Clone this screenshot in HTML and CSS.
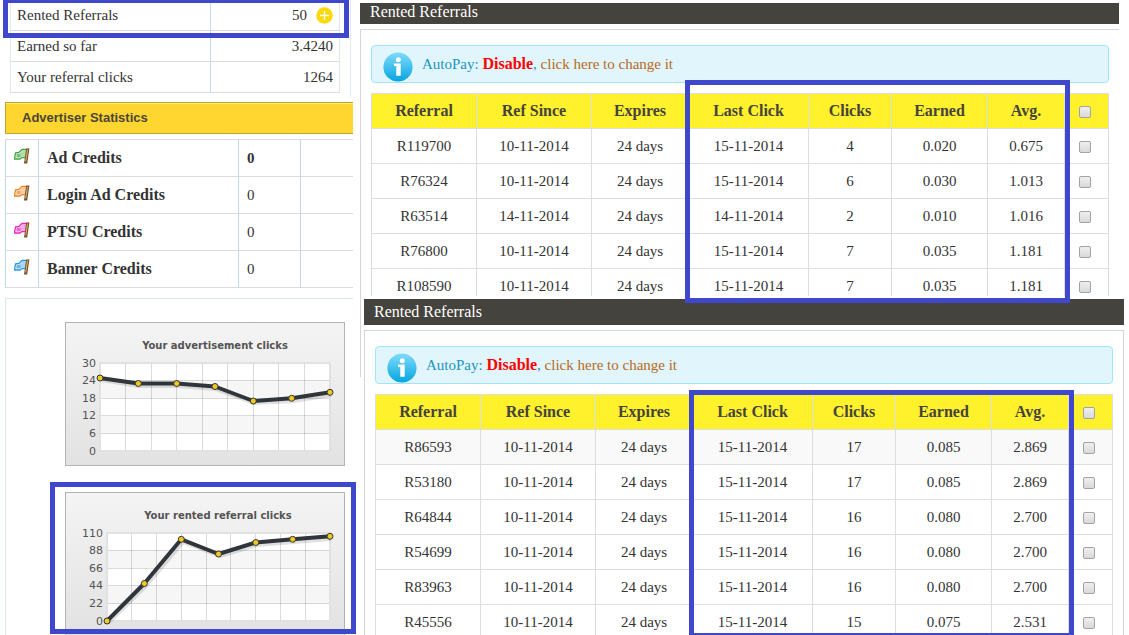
FILE: index.html
```html
<!DOCTYPE html>
<html lang="en">
<head>
<meta charset="utf-8">
<title>Rented Referrals</title>
<link rel="stylesheet" href="styles.css">
</head>
<body>
<svg class="defs" aria-hidden="true">
  <defs>
    <linearGradient id="chart-bg" x1="0" y1="0" x2="0" y2="1"><stop offset="0" stop-color="#f4f4f4"/><stop offset="1" stop-color="#e2e2e2"/></linearGradient>
    <linearGradient id="info-bg" x1="0" y1="0" x2="0" y2="1"><stop offset="0" stop-color="#7fdcfb"/><stop offset="1" stop-color="#05a5e0"/></linearGradient>
    <symbol id="info" viewBox="0 0 30 30">
      <circle cx="15" cy="15" r="14.6" fill="url(#info-bg)"/>
      <circle cx="15.3" cy="7.7" r="2.5" fill="#fff"/>
      <path d="M11 11.500h6.700v12.200h-4.400v-9.600H11z" fill="#fff"/>
    </symbol>
    <symbol id="flag" viewBox="0 0 16 16">
      <path d="M1.500 5l3.500-.5 3-3h5.500l-1.500 8-4-.2-2 1.700H.5z" fill="#fff" stroke="currentColor" stroke-width="1.300"/>
      <path d="M2.500 5.800l3-.4 3-2.900h4l-1 6-3.500-.2-2 1.400H1.500z" fill="currentColor" opacity=".4"/>
      <path d="M3 6h3.500v3H2.800z" fill="currentColor" opacity=".5"/>
      <path d="M12.200 .5h3.200L13.200 15.500h-3.200z" fill="#735029"/>
      <path d="M13 1.500h1.200L12.300 13.500h-1.200z" fill="#d5a468"/>
    </symbol>
  </defs>
</svg>
<div class="page">
  <aside class="stats">
    <div class="summary">
      <table class="summary-table">
        <tr><th scope="row">Rented Referrals</th><td><span class="count">50 <a class="add" href="#" aria-label="Add referrals"><svg viewBox="0 0 17 17"><circle cx="8.500" cy="8.500" r="8.300" fill="#fbd90a"/><path d="M8.500 4v9M4 8.500h9" stroke="#fff" stroke-width="1.300"/></svg></a></span></td></tr>
        <tr><th scope="row">Earned so far</th><td>3.4240</td></tr>
        <tr><th scope="row">Your referral clicks</th><td>1264</td></tr>
      </table>
      <div class="mark mark-summary"></div>
    </div>
    <h2 class="banner">Advertiser Statistics</h2>
    <table class="credits">
      <colgroup><col class="c-flag"><col class="c-name"><col class="c-num"><col></colgroup>
      <tr><td><svg class="flag green"><use href="#flag"/></svg></td><th scope="row">Ad Credits</th><td class="strong">0</td><td></td></tr>
      <tr><td><svg class="flag orange"><use href="#flag"/></svg></td><th scope="row">Login Ad Credits</th><td>0</td><td></td></tr>
      <tr><td><svg class="flag pink"><use href="#flag"/></svg></td><th scope="row">PTSU Credits</th><td>0</td><td></td></tr>
      <tr><td><svg class="flag blue"><use href="#flag"/></svg></td><th scope="row">Banner Credits</th><td>0</td><td></td></tr>
    </table>
    <div class="charts">
      <div class="chart">
        <svg viewBox="0 0 280 144" role="img" aria-label="Your advertisement clicks">
          <rect x=".5" y=".5" width="279" height="143" fill="url(#chart-bg)" stroke="#b3b3b3"/>
          <text class="chart-title" x="150" y="27">Your advertisement clicks</text>
          <rect x="35" y="41" width="230" height="88" fill="#fff"/>
          <path d="M35 58.500h230v17.500H35zM35 94h230v17.500H35z" fill="#f6f6f6"/>
          <path d="M35 58.500h230M35 76.500h230M35 93.500h230M35 111.500h230M60.500 41v88M86.500 41v88M111.500 41v88M137.500 41v88M162.500 41v88M188.500 41v88M213.500 41v88M239.500 41v88" stroke="#000" stroke-opacity=".14" fill="none"/>
          <rect x="35" y="41" width="230" height="88" fill="none" stroke="#e1e1e1" stroke-width="2"/>
          <g class="axis"><text x="31" y="45">30</text><text x="31" y="62">24</text><text x="31" y="80">18</text><text x="31" y="97">12</text><text x="31" y="115">6</text><text x="31" y="133">0</text></g>
          <polyline class="shadow" points="36,58 74,64 113,64 151,67 189,81 228,79 266,73"/>
          <polyline class="line" points="35,56 73.300,61.500 111.700,61.500 150,64.500 188.300,79 226.700,76.300 265,70.300"/>
          <g class="dots"><circle cx="35" cy="56" r="3"/><circle cx="73.300" cy="61.500" r="3"/><circle cx="111.700" cy="61.500" r="3"/><circle cx="150" cy="64.500" r="3"/><circle cx="188.300" cy="79" r="3"/><circle cx="226.700" cy="76.300" r="3"/><circle cx="265" cy="70.300" r="3"/></g>
        </svg>
      </div>
      <div class="chart">
        <svg viewBox="0 0 280 144" role="img" aria-label="Your rented referral clicks">
          <rect x=".5" y=".5" width="279" height="143" fill="url(#chart-bg)" stroke="#b3b3b3"/>
          <text class="chart-title" x="153" y="27">Your rented referral clicks</text>
          <rect x="42" y="41" width="223" height="88" fill="#fff"/>
          <path d="M42 58.500h223v17.500H42zM42 94h223v17.500H42z" fill="#f6f6f6"/>
          <path d="M42 58.500h223M42 76.500h223M42 93.500h223M42 111.500h223M66.500 41v88M91.500 41v88M116.500 41v88M141.500 41v88M165.500 41v88M190.500 41v88M215.500 41v88M240.500 41v88" stroke="#000" stroke-opacity=".14" fill="none"/>
          <rect x="42" y="41" width="223" height="88" fill="none" stroke="#e1e1e1" stroke-width="2"/>
          <g class="axis"><text x="38" y="45">110</text><text x="38" y="62">88</text><text x="38" y="80">66</text><text x="38" y="97">44</text><text x="38" y="115">22</text><text x="38" y="133">0</text></g>
          <polyline class="shadow" points="43,131 81,94 118,50 155,64 192,53 229,50 266,47"/>
          <polyline class="line" points="42,129 79.300,91.500 116.300,47.300 153.500,62 190.800,50.500 227.700,47.300 265,44.300"/>
          <g class="dots"><circle cx="42" cy="129" r="3"/><circle cx="79.300" cy="91.500" r="3"/><circle cx="116.300" cy="47.300" r="3"/><circle cx="153.500" cy="62" r="3"/><circle cx="190.800" cy="50.500" r="3"/><circle cx="227.700" cy="47.300" r="3"/><circle cx="265" cy="44.300" r="3"/></g>
        </svg>
        <div class="mark mark-chart"></div>
      </div>
    </div>
  </aside>
  <main class="lists">
    <section class="list first">
      <h2 class="bar">Rented Referrals</h2>
      <div class="panel">
        <p class="notice"><svg class="info"><use href="#info"/></svg><span>AutoPay: <strong>Disable</strong>, <a href="#">click here to change it</a></span></p>
        <div class="grid-wrap">
          <div class="clip">
            <table class="refs">
              <colgroup><col class="w-ref"><col class="w-since"><col class="w-exp"><col class="w-last"><col class="w-clicks"><col class="w-earned"><col class="w-avg"><col class="w-check"></colgroup>
              <thead><tr><th>Referral</th><th>Ref Since</th><th>Expires</th><th>Last Click</th><th>Clicks</th><th>Earned</th><th>Avg.</th><th><input type="checkbox" aria-label="Select all"></th></tr></thead>
              <tbody>
                <tr><td>R119700</td><td>10-11-2014</td><td>24 days</td><td>15-11-2014</td><td>4</td><td>0.020</td><td>0.675</td><td><input type="checkbox" aria-label="Select R119700"></td></tr>
                <tr><td>R76324</td><td>10-11-2014</td><td>24 days</td><td>15-11-2014</td><td>6</td><td>0.030</td><td>1.013</td><td><input type="checkbox" aria-label="Select R76324"></td></tr>
                <tr><td>R63514</td><td>14-11-2014</td><td>24 days</td><td>14-11-2014</td><td>2</td><td>0.010</td><td>1.016</td><td><input type="checkbox" aria-label="Select R63514"></td></tr>
                <tr><td>R76800</td><td>10-11-2014</td><td>24 days</td><td>15-11-2014</td><td>7</td><td>0.035</td><td>1.181</td><td><input type="checkbox" aria-label="Select R76800"></td></tr>
                <tr><td>R108590</td><td>10-11-2014</td><td>24 days</td><td>15-11-2014</td><td>7</td><td>0.035</td><td>1.181</td><td><input type="checkbox" aria-label="Select R108590"></td></tr>
              </tbody>
            </table>
          </div>
          <div class="mark mark-first"></div>
        </div>
      </div>
    </section>
    <section class="list second">
      <h2 class="bar">Rented Referrals</h2>
      <div class="panel">
        <p class="notice"><svg class="info"><use href="#info"/></svg><span>AutoPay: <strong>Disable</strong>, <a href="#">click here to change it</a></span></p>
        <div class="grid-wrap">
          <table class="refs">
            <colgroup><col class="w-ref"><col class="w-since"><col class="w-exp"><col class="w-last"><col class="w-clicks"><col class="w-earned"><col class="w-avg"><col class="w-check"></colgroup>
            <thead><tr><th>Referral</th><th>Ref Since</th><th>Expires</th><th>Last Click</th><th>Clicks</th><th>Earned</th><th>Avg.</th><th><input type="checkbox" aria-label="Select all"></th></tr></thead>
            <tbody>
              <tr class="shade"><td>R86593</td><td>10-11-2014</td><td>24 days</td><td>15-11-2014</td><td>17</td><td>0.085</td><td>2.869</td><td><input type="checkbox" aria-label="Select R86593"></td></tr>
              <tr><td>R53180</td><td>10-11-2014</td><td>24 days</td><td>15-11-2014</td><td>17</td><td>0.085</td><td>2.869</td><td><input type="checkbox" aria-label="Select R53180"></td></tr>
              <tr><td>R64844</td><td>10-11-2014</td><td>24 days</td><td>15-11-2014</td><td>16</td><td>0.080</td><td>2.700</td><td><input type="checkbox" aria-label="Select R64844"></td></tr>
              <tr><td>R54699</td><td>10-11-2014</td><td>24 days</td><td>15-11-2014</td><td>16</td><td>0.080</td><td>2.700</td><td><input type="checkbox" aria-label="Select R54699"></td></tr>
              <tr><td>R83963</td><td>10-11-2014</td><td>24 days</td><td>15-11-2014</td><td>16</td><td>0.080</td><td>2.700</td><td><input type="checkbox" aria-label="Select R83963"></td></tr>
              <tr><td>R45556</td><td>10-11-2014</td><td>24 days</td><td>15-11-2014</td><td>15</td><td>0.075</td><td>2.531</td><td><input type="checkbox" aria-label="Select R45556"></td></tr>
            </tbody>
          </table>
          <div class="mark mark-second"></div>
        </div>
      </div>
    </section>
  </main>
</div>
</body>
</html>
```

FILE: styles.css
```css
* { box-sizing: border-box; }

body {
  margin: 0;
  background: #fff;
  color: #333;
  font: 15px/20px Georgia, "Liberation Serif", serif;
}

.defs { position: absolute; width: 0; height: 0; }

.page {
  display: grid;
  grid-template-columns: 353px minmax(0, 1fr);
  height: 100vh;
  overflow: hidden;
}

table { border-collapse: collapse; }
h2, p { margin: 0; }

/* Blue frames drawn over the content */
.mark {
  position: absolute;
  border: 5px solid #3f48cc;
  pointer-events: none;
}

/* Left column */
.summary {
  position: relative;
  height: 98px;
  margin-right: 2px;
  padding: 0 10px;
  border-right: 1px solid #e3ebf0;
}
.summary-table { width: 100%; margin-top: -1px; }
.summary-table th,
.summary-table td {
  height: 31px;
  padding: 0 6px;
  border: 1px solid #dcdcdc;
  border-left-color: #c0dfec;
  border-right-color: #dfe9ea;
}
.summary-table th {
  width: 200px;
  border-left-color: #dfe9ea;
  border-right-color: #c0dfec;
  text-align: left;
  font-weight: normal;
}
.summary-table td { text-align: right; }
.count { display: flex; align-items: center; justify-content: flex-end; gap: 9px; }
.add svg { display: block; width: 17px; height: 17px; }
.mark-summary { top: -1px; left: 3px; right: 1px; height: 40px; }

.banner {
  margin: 5px 0 5px 5px;
  padding: 5px 16px;
  border: 1px solid #bda62f;
  border-right: 0;
  background: #ffd530;
  box-shadow: inset 0 1px #ffef7a;
  color: #4a4638;
  font: bold 13px/20px "Liberation Sans", Arial, sans-serif;
}

.credits { width: calc(100% - 5px); margin-left: 5px; table-layout: fixed; }
.credits th,
.credits td {
  height: 37px;
  padding: 0 8px;
  border: 1px solid #d8dcde;
  border-left-color: #c0dcec;
  border-right-color: #c0dcec;
  text-align: left;
}
.credits th { font-size: 16px; }
.credits td:last-child { border-right: 0; }
.c-flag { width: 33px; }
.c-name { width: 200px; }
.c-num { width: 62px; }
.strong { font-weight: bold; }
.flag { display: block; width: 16px; height: 16px; margin-bottom: 4px; }
.green { color: #3fa63c; }
.orange { color: #f58220; }
.pink { color: #ee22c0; }
.blue { color: #2496e6; }

.charts {
  display: grid;
  gap: 26px;
  margin: 10px 0 0 5px;
  padding: 23px 8px 0 59px;
  border-top: 1px solid #dce6e8;
  border-left: 1px solid #dce6e8;
}
.chart { position: relative; }
.chart svg { display: block; width: 100%; }
.chart-title { font: bold 10px "DejaVu Sans", Verdana, sans-serif; fill: #545454; text-anchor: middle; }
.axis { font: 11px "DejaVu Sans", Verdana, sans-serif; fill: #545454; text-anchor: end; }
.line { fill: none; stroke: #30353b; stroke-width: 4; stroke-linejoin: round; }
.shadow { fill: none; stroke: #000; stroke-opacity: .12; stroke-width: 4; stroke-linejoin: round; }
.dots { fill: #f0c81e; stroke: #30353b; }
.mark-chart { top: -10px; left: -15px; right: -11px; height: 152px; }

/* Right column */
.lists { padding-left: 7px; }
.bar {
  padding: 3px 10px;
  background: #45433d;
  color: #fff;
  font-size: 16px;
  line-height: 20px;
  font-weight: normal;
}
.panel { margin-top: 5px; padding: 15px 10px 0; border: 1px solid #d6d6d6; }

.first { position: relative; padding-top: 3px; margin-right: 10px; }
.first .bar { padding: 0 10px 3px; line-height: 18px; }
.first .panel { padding: 15px 10px 0 11px; border-width: 1px 0 0; }
/* The left edge runs on beside the second list */
.first::after {
  content: "";
  position: absolute;
  top: 29px;
  left: 0;
  bottom: -81px;
  border-left: 1px solid #d6d6d6;
}
.second { margin: 3px 5px 0 4px; }

.notice {
  display: flex;
  align-items: center;
  gap: 9px;
  height: 38px;
  padding-left: 11px;
  border: 1px solid #a1e5f8;
  border-radius: 4px;
  background: #e1f5fc;
  color: #1b95bf;
}
.notice strong { color: #f00; font-size: 16px; }
.notice a { color: #b8691c; text-decoration: none; }
.info { width: 30px; height: 30px; margin-top: 6px; }

.grid-wrap { position: relative; margin-top: 10px; }
.clip { height: 203px; overflow-x: visible; overflow-y: clip; }
.refs { width: 100%; table-layout: fixed; text-align: center; }
.refs th,
.refs td { height: 35px; padding: 0; border: 1px solid #dedede; }
.refs th { background: #fff12b; color: #45433d; font-size: 16px; }
.refs th:last-child,
.refs td:last-child { padding-right: 3px; }
.shade { background: #f9f9f9; }
.w-ref { width: 105px; }
.w-since { width: 115px; }
.w-exp { width: 97px; }
.w-last { width: 120px; }
.w-clicks { width: 83px; }
.w-earned { width: 96px; }
.w-avg { width: 77px; }
.w-check { width: 44px; }

.refs input {
  display: block;
  appearance: none;
  width: 12px;
  height: 12px;
  margin: 2px auto 0;
  border: 1px solid #a3a3a3;
  border-radius: 2px;
  background: linear-gradient(#efefef, #d9d9d9);
}

.mark-first,
.mark-second { left: 42.6%; width: 52.1%; }
.mark-first { top: -13px; bottom: -7px; z-index: 1; }
.mark-second { top: -4px; bottom: 2px; }
```
